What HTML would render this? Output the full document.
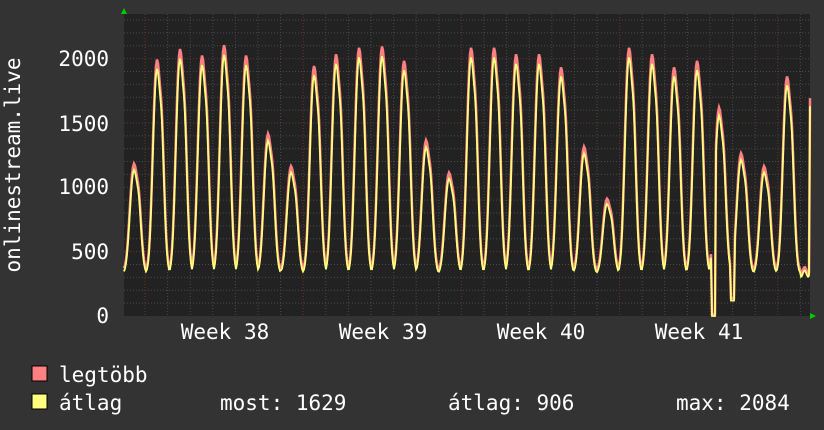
<!DOCTYPE html>
<html><head><meta charset="utf-8"><style>
html,body{margin:0;padding:0;background:#333333;width:824px;height:430px;overflow:hidden}
svg{display:block}
text{font-family:"DejaVu Sans Mono","Liberation Mono",monospace;fill:#fff;font-size:21px}
</style></head><body>
<svg id="g" width="824" height="430" xmlns="http://www.w3.org/2000/svg">
<rect x="124" y="14" width="686" height="302" fill="#222222"/>
<g id="grid"></g>
<g id="data"></g>
<text x="109" y="323" text-anchor="end">0</text>
<text x="109" y="259" text-anchor="end">500</text>
<text x="109" y="194" text-anchor="end">1000</text>
<text x="109" y="131" text-anchor="end">1500</text>
<text x="109" y="66" text-anchor="end">2000</text>
<text x="225" y="339" text-anchor="middle">Week 38</text>
<text x="383" y="339" text-anchor="middle">Week 39</text>
<text x="541" y="339" text-anchor="middle">Week 40</text>
<text x="699" y="339" text-anchor="middle">Week 41</text>
<text transform="translate(20,165) rotate(-90)" text-anchor="middle">onlinestream.live</text>
<polygon points="121,14 127,14 124,8" fill="#00cc00"/>
<polygon points="810,313 810,319 816,316" fill="#00cc00"/>
<rect x="32" y="366" width="15" height="15" fill="#ff8080" stroke="#000" stroke-width="1"/>
<rect x="32" y="394" width="15" height="15" fill="#ffff80" stroke="#000" stroke-width="1"/>
<text x="59" y="382">legtöbb</text>
<text x="59" y="410">átlag</text>
<text x="220" y="410">most: 1629</text>
<text x="448" y="410">átlag: 906</text>
<text x="676" y="410">max: 2084</text>
</svg>
<script>
var NS="http://www.w3.org/2000/svg";
function el(p,t,a){var e=document.createElementNS(NS,t);for(var k in a)e.setAttribute(k,a[k]);p.appendChild(e);return e;}
var grid=document.getElementById('grid');
function Y(v){return 316-v*0.1287;}
for(var v=100;v<=2300;v+=100){var y=Y(v);var major=v%500==0;
el(grid,'line',{x1:124,x2:810,y1:y,y2:y,stroke:major?'#6a3434':'#4a4a4a','stroke-dasharray':'1,2','stroke-width':1});}
for(var x=145-22.6;x<810;x+=22.6){if(x<124)continue;var major=Math.abs(((x-145)/158.3)-Math.round((x-145)/158.3))<0.02;
el(grid,'line',{x1:x,x2:x,y1:14,y2:316,stroke:major?'#6a3434':'#4a4a4a','stroke-dasharray':'1,2','stroke-width':1});}
var peaks=[[135,1150],[158,1950],[181,2030],[203,1980],[225,2060],[247,1980],[269,1380],[292,1130],[315,1900],[337,1990],[360,2040],[383,2050],[405,1940],[427,1330],[450,1080],[472,2040],[495,2040],[517,1990],[540,1990],[562,1890],[585,1280],[608,880],[630,2040],[653,1990],[675,1890],[698,1940],[720,1580],[742,1230],[765,1130],[788,1820]];
function val(x){var b=330+25*Math.sin(x*0.9);
for(var i=0;i<peaks.length;i++){var d=x-peaks[i][0];
if(Math.abs(d)<13){var h=peaks[i][1]-330;var f=Math.exp(-Math.pow(Math.abs(d)/6.5,2.6));var dip=1-0.1*Math.exp(-Math.pow((d-2)/2,2));b=Math.max(b,330+h*f*dip);}}
if(x>=712&&x<=715)b=0;if(x>=731&&x<=734)b=Math.min(b,120);
if(x>809.5)b=1629;return b;}
var d=document.getElementById('data');var pr=[],py=[];
for(var x=124;x<=810;x+=1){var v=val(x);py.push(x+','+Y(v).toFixed(1));pr.push(x+','+Y(v*1.03+15).toFixed(1));}
el(d,'polyline',{points:pr.join(' '),fill:'none',stroke:'#ff8080','stroke-width':2.5});
el(d,'polyline',{points:py.join(' '),fill:'none',stroke:'#ffff80','stroke-width':1.8});
</script>
</body></html>
